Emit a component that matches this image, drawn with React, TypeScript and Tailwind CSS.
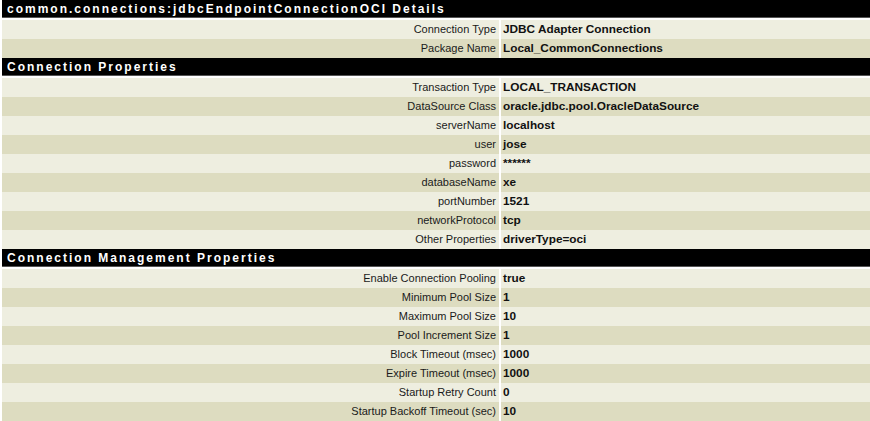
import React from "react";

type Row = [string, string];
const sections: { title: string; rows: Row[] }[] = [
  {
    title: "common.connections:jdbcEndpointConnectionOCI Details",
    rows: [
      ["Connection Type", "JDBC Adapter Connection"],
      ["Package Name", "Local_CommonConnections"],
    ],
  },
  {
    title: "Connection Properties",
    rows: [
      ["Transaction Type", "LOCAL_TRANSACTION"],
      ["DataSource Class", "oracle.jdbc.pool.OracleDataSource"],
      ["serverName", "localhost"],
      ["user", "jose"],
      ["password", "******"],
      ["databaseName", "xe"],
      ["portNumber", "1521"],
      ["networkProtocol", "tcp"],
      ["Other Properties", "driverType=oci"],
    ],
  },
  {
    title: "Connection Management Properties",
    rows: [
      ["Enable Connection Pooling", "true"],
      ["Minimum Pool Size", "1"],
      ["Maximum Pool Size", "10"],
      ["Pool Increment Size", "1"],
      ["Block Timeout (msec)", "1000"],
      ["Expire Timeout (msec)", "1000"],
      ["Startup Retry Count", "0"],
      ["Startup Backoff Timeout (sec)", "10"],
    ],
  },
];

export default function App() {
  return (
    <div
      className="w-[870px] h-[421px] overflow-hidden bg-white pl-[2px] flex flex-col gap-[2px] text-[11px] text-[#1a1a1a]"
      style={{ fontFamily: '"Liberation Sans", Arial, sans-serif' }}
    >
      {sections.map((s) => (
        <React.Fragment key={s.title}>
          <div className="h-[18px] bg-black border-b border-[#555] pl-[5px] flex items-center text-white font-bold text-[12px] tracking-[2px]">
            {s.title}
          </div>
          {s.rows.map(([k, v], i) => {
            const bg = i % 2 === 0 ? "bg-[#eeeee0]" : "bg-[#dddcc0]";
            return (
              <div key={k} className="h-[17px] grid grid-cols-[497px_1fr] gap-[2px]">
                <div className={`${bg} flex items-center justify-end pr-[3px]`}>{k}</div>
                <div className={`${bg} flex items-center pl-[2px] pt-px font-bold text-[11.8px] text-[#111]`}>{v}</div>
              </div>
            );
          })}
        </React.Fragment>
      ))}
    </div>
  );
}
